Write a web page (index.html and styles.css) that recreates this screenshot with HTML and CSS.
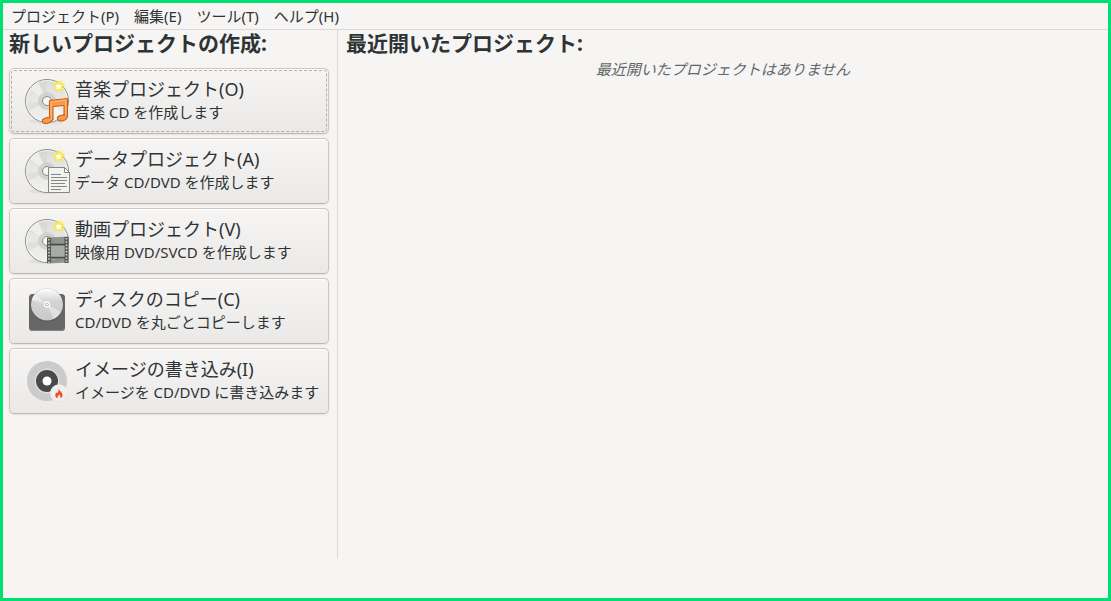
FILE: index.html
```html
<!DOCTYPE html>
<html lang="ja">
<head>
    <meta charset="UTF-8">
    <meta name="viewport" content="width=device-width, initial-scale=1.0">
    <title>Brasero</title>
    <link rel="stylesheet" href="styles.css">
</head>
<body>
    <!-- Shared icon parts -->
    <svg class="icon-defs" aria-hidden="true">
        <defs>
            <linearGradient id="discFill" x1="0" y1="0" x2="0" y2="1">
                <stop offset="0" stop-color="#dcdddb"/>
                <stop offset="0.5" stop-color="#e8e9e7"/>
                <stop offset="1" stop-color="#f0f0ef"/>
            </linearGradient>
            <linearGradient id="copyFill" x1="0" y1="0" x2="0" y2="1">
                <stop offset="0" stop-color="#ffffff"/>
                <stop offset="0.4" stop-color="#d4d4d4"/>
                <stop offset="1" stop-color="#c8c8c8"/>
            </linearGradient>
            <radialGradient id="glow">
                <stop offset="0.3" stop-color="#fce94f"/>
                <stop offset="1" stop-color="#fce94f" stop-opacity="0"/>
            </radialGradient>
            <symbol id="disc" viewBox="0 0 48 48">
                <ellipse cx="24" cy="44" rx="18" ry="3" fill="#000" opacity="0.05"/>
                <circle cx="24" cy="24" r="21.5" fill="url(#discFill)" stroke="#8b8d8a"/>
                <path d="M24 24L7 12A21 21 0 0 1 15 5ZM24 24L41 36A21 21 0 0 1 33 43Z" fill="#fff" opacity="0.4"/>
                <path d="M24 24L15 5A21 21 0 0 1 24 3ZM24 24L3 26A21 21 0 0 0 6 34Z" fill="#cfd0ce" opacity="0.4"/>
                <circle cx="24" cy="24" r="20.5" fill="none" stroke="#fff" opacity="0.6"/>
                <circle cx="24" cy="24" r="9" fill="#cccdcb" opacity="0.8"/>
                <circle cx="24" cy="24" r="4.5" fill="#f6f5f4" stroke="#8b8d8a"/>
                <circle cx="36" cy="9" r="7" fill="url(#glow)"/>
                <path d="M35 4.5L36.8 7.5L40.4 7.3L38.2 10L39.4 13.4L36 12L32.8 13.8L33.3 10.3L30.8 7.8L34.2 7.4Z" fill="#fff" stroke="#f5e21c" stroke-width="0.9"/>
            </symbol>
        </defs>
    </svg>

    <nav class="menubar">
        <button type="button" class="menu">プロジェクト(P)</button>
        <button type="button" class="menu">編集(E)</button>
        <button type="button" class="menu">ツール(T)</button>
        <button type="button" class="menu">ヘルプ(H)</button>
    </nav>

    <main class="content">
        <!-- New project -->
        <section class="new-project">
            <h1>新しいプロジェクトの作成:</h1>
            <div class="project-list">
                <button type="button" class="project selected">
                    <svg class="icon" viewBox="0 0 48 48">
                        <use href="#disc"/>
                        <g fill="#f79a4c" stroke="#c95a0a">
                            <path d="M26.5 23.5L44.5 21.5V40H41V28.5L30 29.5V43H26.5Z" stroke-linejoin="round"/>
                            <ellipse cx="24" cy="43.5" rx="4.8" ry="2.8" transform="rotate(-15 24 43.5)"/>
                            <ellipse cx="39" cy="41" rx="4.8" ry="2.8" transform="rotate(-15 39 41)"/>
                        </g>
                        <path d="M27.5 25L43.5 23M28.2 25V43M42.8 24V40" stroke="#fcb06e" stroke-width="1.5" fill="none"/>
                    </svg>
                    <span class="labels">
                        <span class="title">音楽プロジェクト(O)</span>
                        <span class="desc">音楽 CD を作成します</span>
                    </span>
                </button>
                <button type="button" class="project">
                    <svg class="icon" viewBox="0 0 48 48">
                        <use href="#disc"/>
                        <path d="M25.5 20.5H41.5L46.5 25.5V45.5H25.5Z" fill="#f2f2f1" stroke="#858783"/>
                        <path d="M41.5 20.5V25.5H46.5Z" fill="#fff" stroke="#858783"/>
                        <path d="M28 27.5H38M28 30.5H44M28 33.5H44M28 36.5H42M28 39.5H44M28 42.5H38" stroke="#858783"/>
                    </svg>
                    <span class="labels">
                        <span class="title">データプロジェクト(A)</span>
                        <span class="desc">データ CD/DVD を作成します</span>
                    </span>
                </button>
                <button type="button" class="project">
                    <svg class="icon" viewBox="0 0 48 48">
                        <use href="#disc"/>
                        <path d="M24 20.5L45.5 19.5V45.5L24 46.5Z" fill="#838681" opacity="0.85"/>
                        <path d="M26 21V46M43.5 20V46" stroke="#555754" stroke-width="4"/>
                        <path d="M26 22V46M43.5 21V46" stroke="#d3d5d0" stroke-width="1.6" stroke-dasharray="1.6 1.6"/>
                        <path d="M28 27.5H42M28 40.5H42" stroke="#454744" stroke-width="1.6"/>
                        <path d="M28 29H41.5V39.5H28Z" fill="#a9aca6"/>
                    </svg>
                    <span class="labels">
                        <span class="title">動画プロジェクト(V)</span>
                        <span class="desc">映像用 DVD/SVCD を作成します</span>
                    </span>
                </button>
                <button type="button" class="project">
                    <svg class="icon" viewBox="0 0 48 48">
                        <rect x="6" y="7" width="36" height="37" rx="3.5" fill="#666"/>
                        <path d="M7 42.5Q8 43.5 10 43.5H38Q40 43.5 41 42.5" stroke="#858585" fill="none"/>
                        <circle cx="24" cy="18" r="16.5" fill="#444" opacity="0.5"/>
                        <circle cx="24" cy="17.5" r="16" fill="url(#copyFill)"/>
                        <path d="M24 17.5L8.5 13A16 16 0 0 1 12 7ZM24 17.5L38 25A16 16 0 0 1 31 32Z" fill="#fff" opacity="0.4"/>
                        <circle cx="24" cy="17.5" r="2.5" fill="#aaa" stroke="#fff" stroke-width="1.3"/>
                        <circle cx="24" cy="17.5" r="1" fill="#fff"/>
                    </svg>
                    <span class="labels">
                        <span class="title">ディスクのコピー(C)</span>
                        <span class="desc">CD/DVD を丸ごとコピーします</span>
                    </span>
                </button>
                <button type="button" class="project">
                    <svg class="icon" viewBox="0 0 48 48">
                        <circle cx="24" cy="24" r="20" fill="#cbcbcb"/>
                        <circle cx="24" cy="24" r="12.5" fill="#dedede"/>
                        <circle cx="24" cy="24" r="11" fill="#4a4a4a"/>
                        <circle cx="24" cy="24" r="4.5" fill="#fff"/>
                        <circle cx="36" cy="36.5" r="9" fill="#e4e4e4"/>
                        <circle cx="36" cy="36" r="8.5" fill="#efefef"/>
                        <path d="M35.5 31C36 34 39.5 35 39.5 38.2C39.5 40 38.5 41 37.3 41.3C38 39.5 37 38.5 36 37.5C35.5 39 34 39.5 34.7 41.3C33 40.8 32 39.5 32.3 37.5C32.5 36.5 33 36 33.3 35.3C33.7 36 34 36.3 34.3 36.3C35.5 35 35.8 33 35.5 31Z" fill="#f0501c"/>
                    </svg>
                    <span class="labels">
                        <span class="title">イメージの書き込み(I)</span>
                        <span class="desc">イメージを CD/DVD に書き込みます</span>
                    </span>
                </button>
            </div>
        </section>

        <!-- Recent projects -->
        <section class="recent">
            <h1>最近開いたプロジェクト:</h1>
            <p class="empty">最近開いたプロジェクトはありません</p>
        </section>
    </main>

    <footer class="statusbar"></footer>
</body>
</html>
```
FILE: styles.css
```css
* {
    box-sizing: border-box;
}

body {
    display: flex;
    flex-direction: column;
    min-height: 100vh;
    margin: 0;
    border: 3px solid #00df70;
    background-color: #f6f5f4;
    color: #2e3436;
    font-family: "Noto Sans", "Noto Sans CJK JP", sans-serif;
    font-size: 15px;
}

button {
    color: inherit;
    font: inherit;
    cursor: pointer;
}

h1 {
    margin: 0 0 2px;
    font-size: 21px;
    line-height: 26px;
    font-weight: bold;
}

.icon-defs {
    position: absolute;
    width: 0;
    height: 0;
}

/* Menu bar */
.menubar {
    display: flex;
    height: 27px;
    border-bottom: 1px solid #dbd8d5;
}

.menu {
    padding: 0 8px;
    border: none;
    background: none;
    line-height: 26px;
}

.menu + .menu {
    padding-left: 7px;
}

/* Two panes */
.content {
    display: grid;
    grid-template-columns: 335px 1fr;
    flex: 1;
}

.new-project {
    padding: 0 8px 0 6px;
    border-right: 1px solid #dbd8d5;
}

.project-list {
    display: flex;
    flex-direction: column;
    gap: 4px;
    margin-top: 12px;
}

.project {
    display: flex;
    align-items: center;
    gap: 4px;
    height: 66px;
    padding: 0 8px 0 13px;
    border: 1px solid #cdc7c2;
    border-bottom-color: #bfb8b1;
    border-radius: 5px;
    background: linear-gradient(#f6f5f4, #ebe9e8);
    box-shadow: inset 0 1px #fff, 0 1px 2px rgba(0, 0, 0, 0.08);
    text-align: left;
    white-space: nowrap;
}

.selected {
    outline: 1px dashed #b0b1b1;
    outline-offset: -3px;
}

.icon {
    flex: none;
    width: 48px;
    height: 48px;
}

.labels {
    display: flex;
    flex-direction: column;
    padding-bottom: 2px;
}

.title {
    font-size: 18px;
    line-height: 24px;
}

.desc {
    line-height: 22px;
}

.recent {
    padding: 0 8px;
}

.empty {
    margin: 0;
    color: #62676a;
    font-style: italic;
    line-height: 22px;
    text-align: center;
}

.statusbar {
    height: 39px;
}
```
